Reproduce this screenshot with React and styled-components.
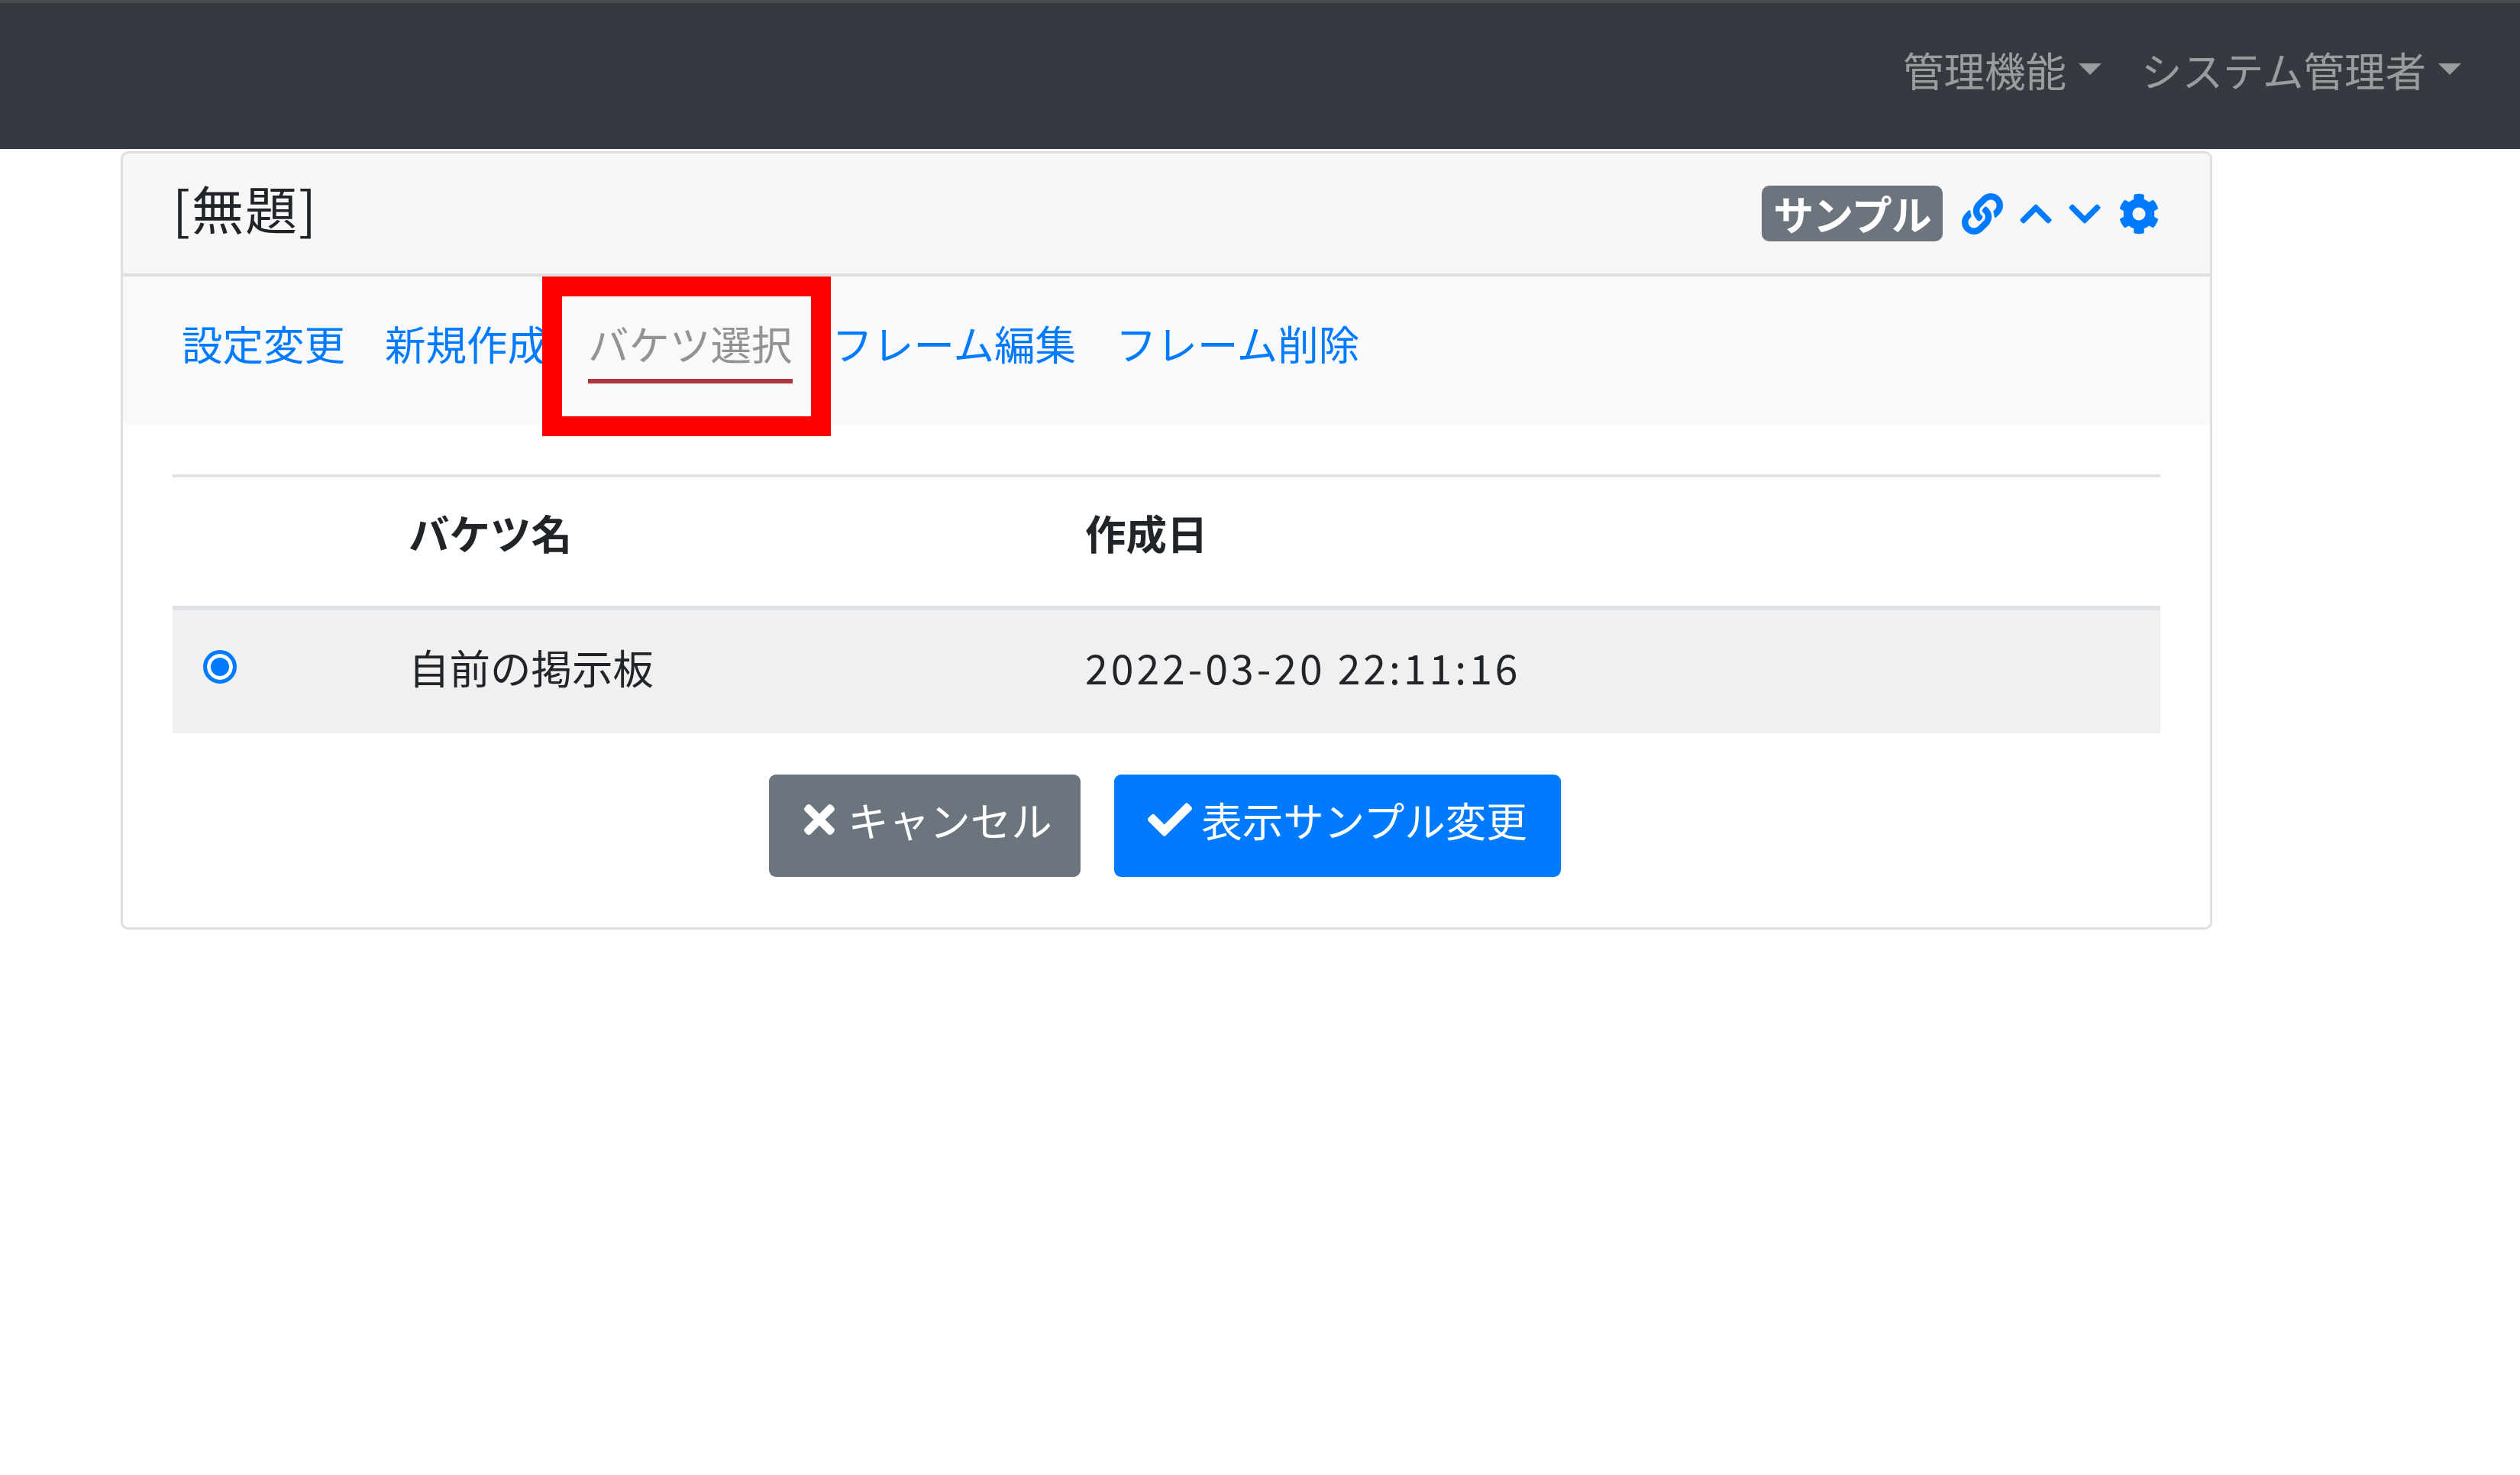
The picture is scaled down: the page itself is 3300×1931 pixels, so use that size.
import React from "react";
import styled, { createGlobalStyle } from "styled-components";
import { FaLink, FaChevronUp, FaChevronDown, FaCog, FaTimes, FaCheck } from "react-icons/fa";

const Global = createGlobalStyle`
  html, body { margin: 0; padding: 0; background: #fff; }
  body {
    font-family: "Noto Sans CJK JP", "Noto Sans", sans-serif;
    font-size: 53.5px;
    line-height: 78px;
    color: #212529;
  }
`;

const Navbar = styled.nav`
  height: 191px;
  background: #343a40;
  border-top: 4px solid #484c50;
  display: flex;
  justify-content: flex-end;
  align-items: center;
  padding-right: 77px;
  gap: 52px;
`;

const NavLink = styled.a`
  display: flex;
  align-items: center;
  gap: 16px;
  color: rgba(255, 255, 255, 0.5);
  margin-top: -18px;
`;

const Caret = styled.span`
  width: 0;
  height: 0;
  border-top: 15px solid rgba(255, 255, 255, 0.5);
  border-left: 15px solid transparent;
  border-right: 15px solid transparent;
`;

const Page = styled.main`
  padding: 3px 0 0 158px;
`;

const Card = styled.section`
  width: 2739px;
  height: 1019px;
  box-sizing: border-box;
  border: 3px solid #dfdfdf;
  border-radius: 10px;
  overflow: hidden;
  display: flex;
  flex-direction: column;
`;

const CardHeader = styled.header`
  height: 161px;
  flex: none;
  box-sizing: border-box;
  background: #f7f7f7;
  border-bottom: 4px solid #dfdfdf;
  display: flex;
  align-items: center;
  justify-content: space-between;
  padding: 0 66px 0 65px;
`;

const Title = styled.h5`
  margin: -16px 0 0;
  font-weight: 400;
  font-size: 68px;
  line-height: 90px;
  color: #212529;
  letter-spacing: 2px;
`;

const Tools = styled.div`
  display: flex;
  align-items: center;
  color: #007bff;
`;

const Badge = styled.span`
  width: 237px;
  height: 73px;
  display: flex;
  align-items: center;
  justify-content: center;
  background: #6c757d;
  color: #fff;
  font-weight: 700;
  font-size: 53px;
  line-height: 73px;
  border-radius: 10px;
  margin-right: 25px;
  letter-spacing: -1px;
`;

const ToolIcon = styled.span`
  display: flex;
  align-items: center;
  justify-content: center;
  margin-left: ${(p) => p.$ml || 0}px;
  font-size: ${(p) => p.$size}px;
  line-height: 0;
`;

const Tabs = styled.ul`
  list-style: none;
  margin: 0;
  height: 194px;
  flex: none;
  box-sizing: border-box;
  background: #f8f9fa;
  display: flex;
  padding: 50px 0 0 77px;
  gap: 52px;
`;

const Tab = styled.li`
  position: relative;
  height: 90px;
  line-height: 74px;
  color: ${(p) => (p.$active ? "#919395" : "#007bff")};
  border-bottom: ${(p) => (p.$active ? "6px solid #b0353f" : "none")};
  box-sizing: border-box;
`;

const Highlight = styled.span`
  position: absolute;
  left: -60px;
  top: -50px;
  width: 378px;
  height: 209px;
  box-sizing: border-box;
  border: 26px solid #ff0000;
  pointer-events: none;
`;

const Body = styled.div`
  flex: 1;
  padding: 65px 65px 0 65px;
  display: flex;
  flex-direction: column;
`;

const Table = styled.table`
  width: 100%;
  border-collapse: collapse;
  table-layout: fixed;
`;

const Head = styled.th`
  width: ${(p) => p.$w}px;
  height: 173px;
  box-sizing: border-box;
  padding: 0 0 24px;
  text-align: left;
  font-weight: 700;
  color: #212529;
  border-top: 4px solid #dee2e6;
  border-bottom: 6px solid #dee2e6;
`;

const Row = styled.tr`
  background: #f0f0f0;
`;

const Cell = styled.td`
  height: 164px;
  box-sizing: border-box;
  padding: 0 0 14px;
  color: #212529;
`;

const DateText = styled.span`
  letter-spacing: 4px;
`;

const RadioWrap = styled.span`
  display: flex;
  padding-left: 40px;
`;

const Radio = styled.span`
  width: 44px;
  height: 44px;
  box-sizing: border-box;
  border-radius: 50%;
  border: 5px solid #007bff;
  background: #007bff;
  box-shadow: inset 0 0 0 5px #fff;
`;

const Actions = styled.div`
  display: flex;
  justify-content: center;
  gap: 44px;
  margin-top: 54px;
  padding-right: 4px;
`;

const Button = styled.button`
  width: ${(p) => p.$w}px;
  height: 134px;
  border: none;
  border-radius: 9px;
  padding: 0 0 16px;
  background: ${(p) => p.$bg};
  color: #fff;
  font: inherit;
  display: flex;
  align-items: center;
  justify-content: center;
  gap: ${(p) => p.$gap}px;
`;

const tabs = ["設定変更", "新規作成", "バケツ選択", "フレーム編集", "フレーム削除"];

export default function App() {
  return (
    <>
      <Global />
      <Navbar>
        <NavLink>管理機能<Caret /></NavLink>
        <NavLink>システム管理者<Caret /></NavLink>
      </Navbar>
      <Page>
        <Card>
          <CardHeader>
            <Title>[無題]</Title>
            <Tools>
              <Badge>サンプル</Badge>
              <ToolIcon $size={54}><FaLink /></ToolIcon>
              <ToolIcon $size={48} $ml={19}><FaChevronUp /></ToolIcon>
              <ToolIcon $size={48} $ml={16}><FaChevronDown /></ToolIcon>
              <ToolIcon $size={54} $ml={20}><FaCog /></ToolIcon>
            </Tools>
          </CardHeader>
          <Tabs>
            {tabs.map((t) => (
              <Tab key={t} $active={t === "バケツ選択"}>
                {t}
                {t === "バケツ選択" && <Highlight />}
              </Tab>
            ))}
          </Tabs>
          <Body>
            <Table>
              <thead>
                <tr>
                  <Head $w={309} />
                  <Head $w={886}>バケツ名</Head>
                  <Head>作成日</Head>
                </tr>
              </thead>
              <tbody>
                <Row>
                  <Cell><RadioWrap><Radio /></RadioWrap></Cell>
                  <Cell>自前の掲示板</Cell>
                  <Cell><DateText>2022-03-20 22:11:16</DateText></Cell>
                </Row>
              </tbody>
            </Table>
            <Actions>
              <Button $w={408} $gap={8} $bg="#6c757d"><FaTimes size={58} />キャンセル</Button>
              <Button $w={585} $gap={12} $bg="#007bff"><FaCheck size={58} />表示サンプル変更</Button>
            </Actions>
          </Body>
        </Card>
      </Page>
    </>
  );
}
